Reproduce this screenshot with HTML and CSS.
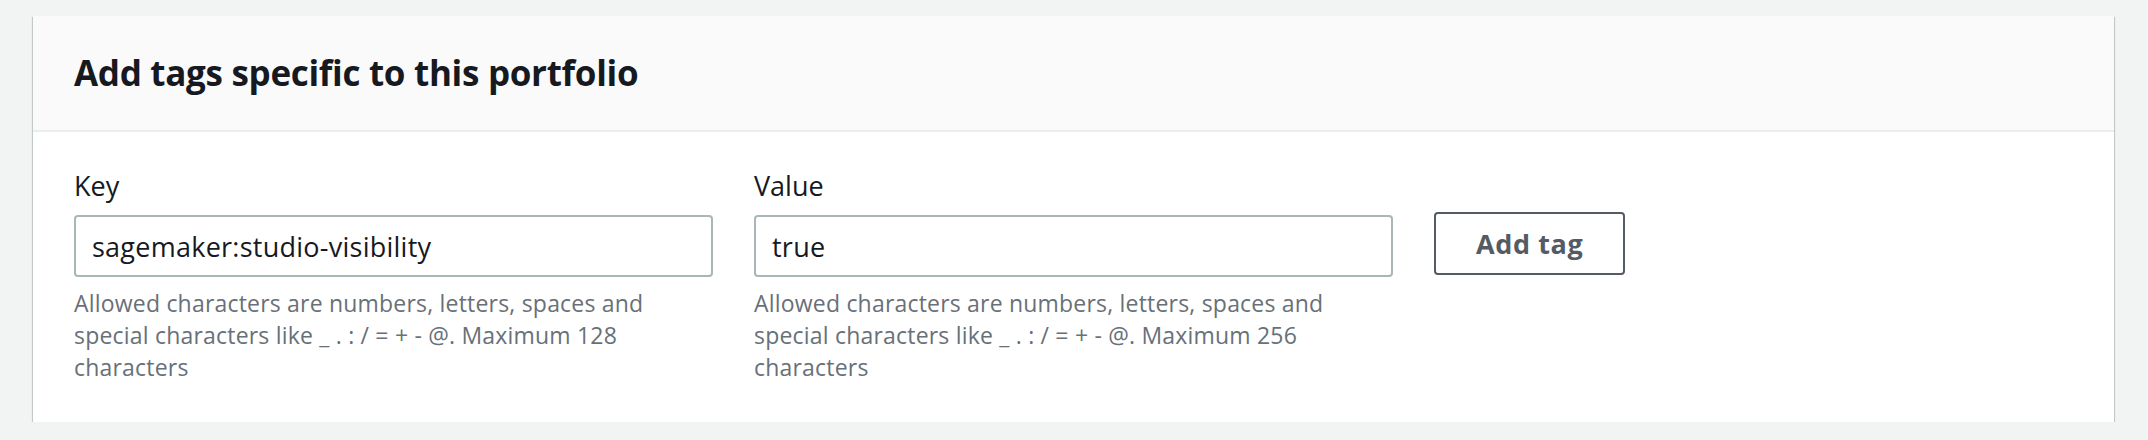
FILE: index.html
```html
<!DOCTYPE html>
<html lang="en">
<head>
<meta charset="utf-8">
<title>Add tags</title>
<link rel="stylesheet" href="styles.css">
</head>
<body>
<section class="card">
  <header class="card-header">
    <h2 class="card-title">Add tags specific to this portfolio</h2>
  </header>
  <div class="card-body">
    <div class="tag-row">
      <div class="field">
        <label class="field-label" for="tag-key">Key</label>
        <input class="field-input" id="tag-key" type="text" value="sagemaker:studio-visibility">
        <p class="field-help">Allowed characters are numbers, letters, spaces and special characters like _ . : / = + - @. Maximum 128 characters</p>
      </div>
      <div class="field">
        <label class="field-label" for="tag-value">Value</label>
        <input class="field-input" id="tag-value" type="text" value="true">
        <p class="field-help">Allowed characters are numbers, letters, spaces and special characters like _ . : / = + - @. Maximum 256 characters</p>
      </div>
      <div class="field-action">
        <button class="btn-normal" type="button">Add tag</button>
      </div>
    </div>
  </div>
</section>
</body>
</html>
```
FILE: styles.css
```css
html, body {
  margin: 0;
  padding: 0;
}

html {
  background: #f2f3f3;
}

body {
  font-family: "Open Sans", "Noto Sans", "Liberation Sans", sans-serif;
  color: #16191f;
  padding: 16px 34px 0 33px;
}

.card {
  background: #ffffff;
  box-shadow: 0 1px 1px 0 rgba(0, 28, 36, 0.3), 1px 1px 1px 0 rgba(0, 28, 36, 0.15), -1px 1px 1px 0 rgba(0, 28, 36, 0.15);
}

.card-header {
  background: #fafafa;
  border-bottom: 2px solid #eaeded;
  height: 114px;
  display: flex;
  align-items: center;
  padding: 0 41px;
}

.card-title {
  margin: 0;
  font-size: 35px;
  font-weight: 700;
  line-height: 44px;
  letter-spacing: -0.3px;
  color: #16191f;
}

.card-body {
  padding: 32px 41px 39px;
}

.tag-row {
  display: grid;
  grid-template-columns: 639px 639px auto;
  column-gap: 41px;
  align-items: start;
}

.field {
  display: flex;
  flex-direction: column;
}

.field-label {
  font-size: 27px;
  line-height: 43px;
  color: #16191f;
}

.field-input {
  margin-top: 8px;
  height: 62px;
  box-sizing: border-box;
  border: 2px solid #aab7b8;
  border-radius: 4px;
  padding: 0 16px;
  font-family: inherit;
  font-size: 27px;
  letter-spacing: 0.25px;
  color: #16191f;
  background: #ffffff;
  outline: none;
}

.field-help {
  margin: 10px 0 0;
  font-size: 23px;
  line-height: 32px;
  letter-spacing: 0.2px;
  color: #687078;
}

.field-action {
  padding-top: 48px;
  display: flex;
}

.btn-normal {
  height: 63px;
  box-sizing: border-box;
  border: 2px solid #545b64;
  border-radius: 4px;
  background: #ffffff;
  color: #545b64;
  font-family: inherit;
  font-size: 27px;
  font-weight: 700;
  letter-spacing: 0.6px;
  padding: 0 40px;
  cursor: pointer;
}
```
